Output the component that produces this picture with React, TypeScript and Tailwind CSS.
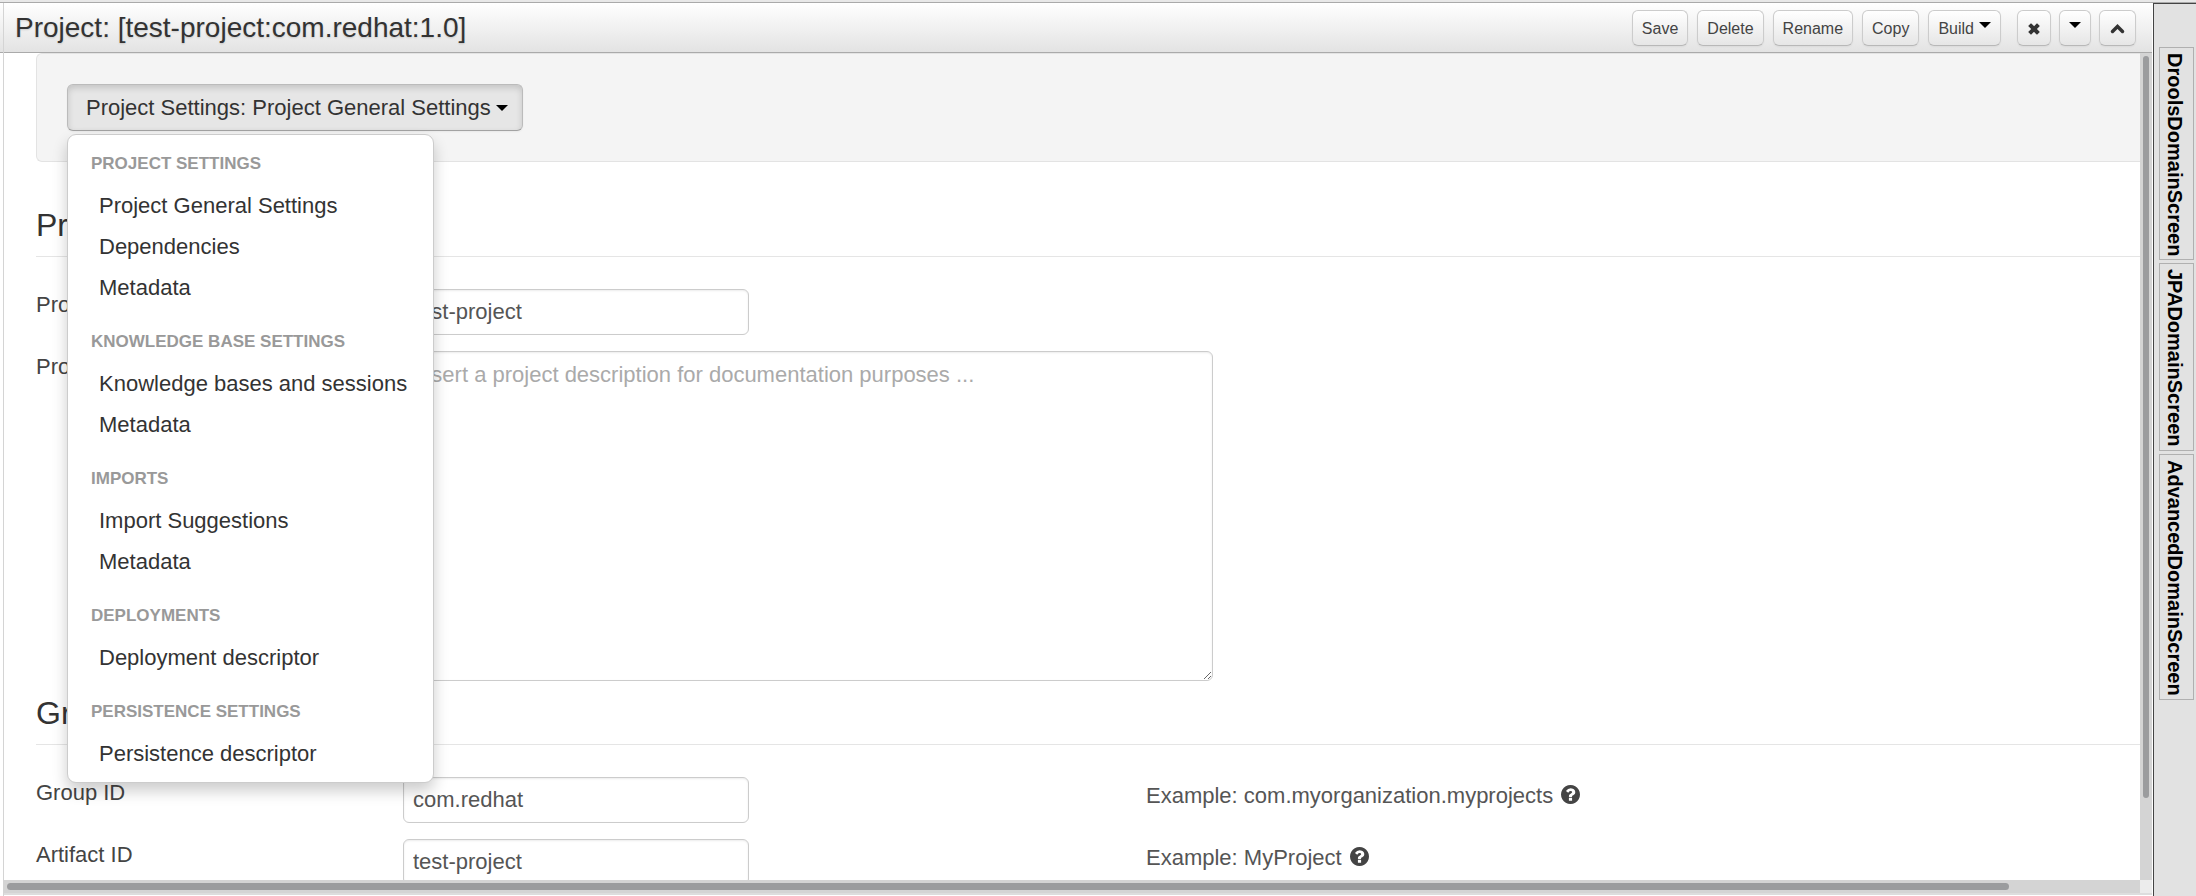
import type { ReactNode } from "react";

const menu = [
  {
    title: "PROJECT SETTINGS",
    items: ["Project General Settings", "Dependencies", "Metadata"],
  },
  {
    title: "KNOWLEDGE BASE SETTINGS",
    items: ["Knowledge bases and sessions", "Metadata"],
  },
  { title: "IMPORTS", items: ["Import Suggestions", "Metadata"] },
  { title: "DEPLOYMENTS", items: ["Deployment descriptor"] },
  { title: "PERSISTENCE SETTINGS", items: ["Persistence descriptor"] },
];

const screens = [
  "DroolsDomainScreen",
  "JPADomainScreen",
  "AdvancedDomainScreen",
];

const inputStyle =
  "block rounded-md border border-[#ccc] bg-white px-[9px] text-[22px] text-[#555] shadow-[inset_0_1px_2px_rgba(0,0,0,0.08)]";

function Caret() {
  return (
    <svg width="12" height="6" viewBox="0 0 12 6" className="shrink-0">
      <path d="M0 0h12L6 6z" fill="#000" />
    </svg>
  );
}

function ToolButton({ label, children }: { label?: string; children: ReactNode }) {
  return (
    <button
      type="button"
      aria-label={label}
      className="flex h-9 items-center gap-[5px] rounded-md border border-[#ccc] border-b-[#b8b8b8] bg-linear-to-b from-white to-[#e6e6e6] px-[9px] pt-[2px] text-[16px] text-[#444] shadow-[0_1px_2px_rgba(0,0,0,0.05)]"
    >
      {children}
    </button>
  );
}

function Help() {
  return (
    <svg width="19" height="19" viewBox="128 128 1536 1536" fill="#444">
      <path d="M1024 1376v-192q0-14-9-23t-23-9h-192q-14 0-23 9t-9 23v192q0 14 9 23t23 9h192q14 0 23-9t9-23zm256-672q0-88-55.5-163t-138.5-116-170-41q-243 0-371 213-15 24 8 42l132 100q7 6 19 6 16 0 25-12 53-68 86-92 34-24 86-24 48 0 85.5 26t37.5 59q0 38-20 61t-68 45q-63 28-115.5 86.5t-52.5 125.5v36q0 14 9 23t23 9h192q14 0 23-9t9-23q0-19 21.5-49.5t54.5-49.5q32-18 49-28.5t46-35 44.5-48 28-60.5 12.5-81zm384 192q0 209-103 385.5t-279.5 279.5-385.5 103-385.5-103-279.5-279.5-103-385.5 103-385.5 279.5-279.5 385.5-103 385.5 103 279.5 279.5 103 385.5z" />
    </svg>
  );
}

function Heading({ children }: { children: ReactNode }) {
  return (
    <h2 className="mb-8 border-b border-[#e5e5e5] pb-[2px] text-[32px] leading-[58px] text-[#333]">
      {children}
    </h2>
  );
}

function Row({
  id,
  label,
  example,
  children,
}: {
  id: string;
  label: string;
  example?: string;
  children: ReactNode;
}) {
  return (
    <div className="mb-4 grid grid-cols-[367px_743px_1fr] items-start last:mb-[3px]">
      <label htmlFor={id} className="pt-px text-[#444]">
        {label}
      </label>
      {children}
      {example && (
        <div className="flex pt-1">
          <span>Example: {example}</span>
          <button type="button" aria-label="Help" className="ml-2 h-[26px]">
            <Help />
          </button>
        </div>
      )}
    </div>
  );
}

export default function App() {
  return (
    <div className="flex h-screen flex-col overflow-hidden bg-white font-['Liberation_Sans',Arial,sans-serif] text-[22px] leading-[30px] text-[#555]">
      <div className="h-[3px] shrink-0 border-b border-[#aaa] bg-[#e8e8e8]" />
      <div className="flex min-h-0 flex-1">
        {/* edge of the collapsed panel on the left */}
        <div className="w-[3px] shrink-0">
          <div className="h-[50px] border-b border-[#aaa] bg-linear-to-b from-white to-[#e3e3e3]" />
        </div>

        <main className="flex min-w-0 flex-1 flex-col border-l border-[#d4d4d4]">
          <header className="flex h-[50px] shrink-0 items-center justify-between border-b border-[#aaa] bg-linear-to-b from-white to-[#e3e3e3] pr-4 pl-[11px]">
            <h1 className="text-[28px] text-[#333] [text-shadow:0_1px_2px_rgba(0,0,0,0.15)]">
              Project: [test-project:com.redhat:1.0]
            </h1>
            <div className="flex gap-4">
              <div className="flex gap-[9px]">
                <ToolButton>Save</ToolButton>
                <ToolButton>Delete</ToolButton>
                <ToolButton>Rename</ToolButton>
                <ToolButton>Copy</ToolButton>
                <ToolButton>
                  Build
                  <span className="pb-[8px]">
                    <Caret />
                  </span>
                </ToolButton>
              </div>
              <div className="flex gap-2">
                <ToolButton label="Close">
                  <svg width="14" height="14" viewBox="0 0 14 14">
                    <path
                      d="M4 4l6 6M10 4l-6 6"
                      stroke="#333"
                      strokeWidth="4"
                      strokeLinecap="square"
                    />
                  </svg>
                </ToolButton>
                <ToolButton label="More">
                  <span className="pb-[8px]">
                    <Caret />
                  </span>
                </ToolButton>
                <ToolButton label="Collapse">
                  <svg width="17" height="16" viewBox="0 0 17 16" fill="none">
                    <path
                      d="M3.5 10.5l5-5 5 5"
                      stroke="#333"
                      strokeWidth="3.5"
                      strokeLinecap="round"
                    />
                  </svg>
                </ToolButton>
              </div>
            </div>
          </header>

          <div className="flex min-h-0 flex-1">
            <div className="min-w-0 flex-1 overflow-hidden pl-8">
              <div className="mb-[34px] flex rounded-l-md border border-r-0 border-[#e3e3e3] bg-[#f4f4f4] px-[30px] py-[30px]">
                <div className="relative">
                  <button
                    type="button"
                    className="flex h-[47px] items-center gap-[5px] rounded-md border border-[#bbb] border-b-[#a2a2a2] bg-[#e6e6e6] pr-[14px] pl-[18px] text-[#333] shadow-[inset_0_3px_6px_rgba(0,0,0,0.15),0_1px_2px_rgba(0,0,0,0.05)]"
                  >
                    Project Settings: Project General Settings
                    <Caret />
                  </button>
                  <div className="absolute top-full left-0 z-10 mt-[3px] rounded-[9px] border border-[#ccc] bg-white py-2 whitespace-nowrap shadow-[0_8px_15px_rgba(0,0,0,0.2)]">
                    {menu.map((group) => (
                      <div key={group.title} className="mt-[13px] first:mt-0">
                        <h3 className="pl-[23px] text-[17px] leading-[42px] font-bold text-[#999]">
                          {group.title}
                        </h3>
                        {group.items.map((item) => (
                          <a
                            key={item}
                            href="#"
                            className="block pr-[26px] pl-[31px] leading-[41px] text-[#333]"
                          >
                            {item}
                          </a>
                        ))}
                      </div>
                    ))}
                  </div>
                </div>
              </div>

              <section>
                <Heading>Project General Settings</Heading>
                <Row id="name" label="Project Name">
                  <input
                    id="name"
                    defaultValue="test-project"
                    className={`${inputStyle} h-[46px] w-[346px]`}
                  />
                </Row>
                <Row id="description" label="Project Description">
                  <textarea
                    id="description"
                    placeholder="Insert a project description for documentation purposes ..."
                    className={`${inputStyle} h-[330px] w-[810px] py-2 placeholder:text-[#aaa]`}
                  />
                </Row>
              </section>

              <section>
                <Heading>Group artifact version</Heading>
                <Row
                  id="group"
                  label="Group ID"
                  example="com.myorganization.myprojects"
                >
                  <input
                    id="group"
                    defaultValue="com.redhat"
                    className={`${inputStyle} h-[46px] w-[346px]`}
                  />
                </Row>
                <Row id="artifact" label="Artifact ID" example="MyProject">
                  <input
                    id="artifact"
                    defaultValue="test-project"
                    className={`${inputStyle} h-[46px] w-[346px]`}
                  />
                </Row>
              </section>
            </div>

            <div className="w-3 shrink-0 bg-[#d4d4d4] px-[3px] pt-[3px]">
              <div className="h-[90%] rounded-full bg-[#9b9c9e]" />
            </div>
          </div>

          <div className="flex h-[13px] shrink-0">
            <div className="flex-1 bg-[#d4d4d4] p-[3px]">
              <div className="h-full w-[94%] rounded-full bg-[#9b9c9e]" />
            </div>
            <div className="w-3 bg-[#ececec]" />
          </div>
          <div className="h-[3px] shrink-0 border-b border-white bg-[#ddd]" />
        </main>

        <aside className="ml-px flex w-[43px] shrink-0 flex-col gap-[3px] border-t border-l border-[#444] bg-[#e2e2e2] pt-[43px] pr-[2px] pl-[5px]">
          {screens.map((screen) => (
            <button
              key={screen}
              type="button"
              className="flex items-center justify-center border border-[#b0b0b0] pt-[5px] pr-1 pb-[3px] text-[20px] font-bold text-black [writing-mode:vertical-rl]"
            >
              {screen}
            </button>
          ))}
        </aside>
      </div>
    </div>
  );
}
